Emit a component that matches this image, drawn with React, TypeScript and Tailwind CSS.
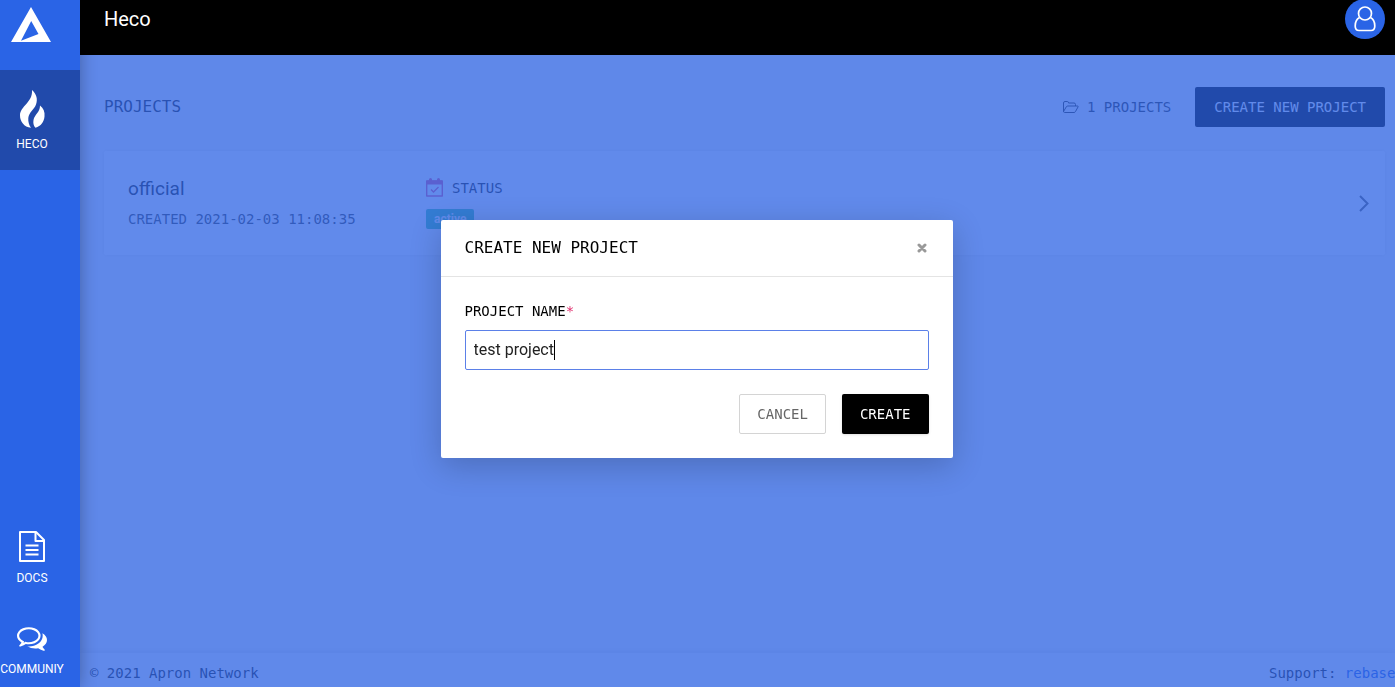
import { useState } from "react";

const mono = "font-['DejaVu_Sans_Mono',monospace]";

function LogoIcon() {
  return (
    <svg viewBox="0 0 40 35" className="h-[35px] w-10" fill="currentColor" aria-hidden="true">
      <path fillRule="evenodd" d="M20 0 40 35H0ZM20.200 14 10 33.800 27.500 27Z" />
    </svg>
  );
}

function FlameIcon() {
  return (
    <svg viewBox="0 0 25 38" className="h-[38px] w-[25px]" fill="currentColor" aria-hidden="true">
      <path d="M12 0C16.500 4 18 9 16 14.500C14 20 9 22 8.300 28C8 32 9 35 11 37.800C4 37 0 31.500 0 25.500C0 16 13 12.500 12 0Z" />
      <path d="M20 15.500C23.500 18 25 22 24.500 26.500C24 32 21 36 15.500 37.800C13.500 36 13 33 13.500 30C14.500 24.500 20 22.500 20 15.500Z" />
    </svg>
  );
}

function DocIcon() {
  return (
    <svg viewBox="0 0 26 31" className="h-[31px] w-[26px]" fill="none" stroke="currentColor" strokeWidth="2" strokeLinejoin="round" aria-hidden="true">
      <path d="M1 1h16L25 9V30H1Z" />
      <path d="M16.500 1.500v8.500H25" />
      <path d="M6.500 14.500h13M6.500 19h13M6.500 23.500h13" />
    </svg>
  );
}

function CommentsIcon() {
  return (
    <svg viewBox="0 0 1792 1536" className="h-[26px] w-[30px]" fill="currentColor" aria-hidden="true">
      <path d="M704 128q-153 0-286 52t-211.500 141T128 512q0 82 53 158t149 132l97 56-35 84q34-20 62-39l44-31 53 10q78 14 153 14 153 0 286-52t211.500-141T1280 512t-78.500-191T990 180 704 128zm0-128q191 0 353.500 68.500t256.500 186.500 94 257-94 257-256.500 186.500T704 1024q-86 0-176-16-124 88-278 128-36 9-86 16h-3q-11 0-20.500-8t-11.500-21q-1-3-1-6.500t.5-6.500 2-6l2.500-5 3.500-5.500 4-5 4.500-5 4-4.500q5-6 23-25t26-29.500 22.500-29 25-38.500 20.500-44q-124-72-195-177T0 512q0-139 94-257T350.500 68.500 704 0zm822 1169q10 24 20.500 44t25 38.500 22.500 29 26 29.500 23 25q1 1 4 4.500t4.500 5 4 5 3.500 5.500l2.500 5 2 6 .5 6.500-1 6.500q-3 14-13 22t-22 7q-50-7-86-16-154-40-278-128-90 16-176 16-271 0-472-132 58 4 88 4 161 0 309-45t264-129q125-92 192-212t67-254q0-77-23-152 129 71 204 178t75 230q0 120-71 224.500T1526 1169z" />
    </svg>
  );
}

function UserIcon() {
  return (
    <svg viewBox="0 0 22 26" className="h-[26px] w-[22px]" fill="none" stroke="currentColor" strokeWidth="1.700" aria-hidden="true">
      <circle cx="11" cy="7.500" r="6.500" />
      <path d="M5.500 11.500C2.500 13 1.200 16.500 1.200 20C1.200 23 2.500 24.500 5 24.500H17C19.500 24.500 20.800 23 20.800 20C20.800 16.500 19.500 13 16.500 11.500" />
    </svg>
  );
}

function CalendarIcon() {
  return (
    <svg viewBox="0 0 17 19" className="h-[19px] w-[17px]" fill="none" stroke="currentColor" aria-hidden="true">
      <path d="M.7 3h15.600v15H.7Z" strokeWidth="1.400" strokeLinejoin="round" />
      <path d="M.7 3h15.600v3H.7Z" fill="currentColor" />
      <path d="M4.500 4v-2.500M12.500 4v-2.500" strokeWidth="3" strokeLinecap="round" />
      <path d="M5 11.500l2.500 2.500 5-5" strokeWidth="1.300" />
    </svg>
  );
}

function FolderIcon() {
  return (
    <svg viewBox="0 0 16 12" className="h-3 w-4" fill="none" stroke="currentColor" strokeLinejoin="round" aria-hidden="true">
      <path d="M.5 10V2Q.5.5 2 .5H4.500Q5.500.5 5.500 2H11Q12.500 2 12.500 3.500V5M.5 10.500 3.500 5.500Q4 5 5 5H14.500Q15.500 5 15 6L12.500 10.500Q12 11.500 11 11.500H1.500Q.5 11.500.5 10" />
    </svg>
  );
}

function ChevronIcon() {
  return (
    <svg viewBox="0 0 10 17" className="h-[17px] w-[10px]" fill="none" stroke="currentColor" strokeWidth="2" aria-hidden="true">
      <path d="M1 1l7.500 7.500L1 16" />
    </svg>
  );
}

function CloseIcon() {
  return (
    <svg viewBox="0 0 10 10" className="size-[10px]" stroke="currentColor" strokeWidth="3" strokeLinecap="round" aria-hidden="true">
      <path d="M2 2l6 6M8 2L2 8" />
    </svg>
  );
}

function Sidebar() {
  return (
    <nav className="relative z-20 flex w-20 shrink-0 flex-col bg-[#2a64e6] text-xs text-white shadow-[0_0_16px_rgba(0,0,0,0.3)]">
      <a href="#home" aria-label="Apron" className="flex h-[70px] w-[61px] justify-center pt-[7px]">
        <LogoIcon />
      </a>
      <a href="#heco" className="flex h-[100px] flex-col items-center gap-2 bg-[#214aab] pt-5 pr-4">
        <FlameIcon />
        HECO
      </a>
      <div className="mt-auto flex flex-col pb-[10px]">
        <a href="#docs" className="flex h-[92px] flex-col items-center gap-2 pr-4">
          <DocIcon />
          DOCS
        </a>
        <a href="#community" className="flex flex-col items-center gap-2 pt-1 pr-4">
          <CommentsIcon />
          COMMUNIY
        </a>
      </div>
    </nav>
  );
}

export default function App() {
  const [name, setName] = useState("test project");

  return (
    <div className="flex h-screen overflow-hidden bg-[#f7f7f7] font-[Roboto,sans-serif] text-black">
      <Sidebar />
      <div className="flex min-w-0 flex-1 flex-col">
        <header className="relative z-30 flex h-[55px] shrink-0 items-center justify-between bg-black pr-[10px] pb-[17px] pl-6 text-white">
          <h1 className="text-xl">Heco</h1>
          <button aria-label="Account" className="flex size-10 items-center justify-center rounded-full bg-[#2a64e6]">
            <UserIcon />
          </button>
        </header>

        <div className="relative flex min-h-0 flex-1 flex-col">
          <main className="flex-1 pt-8 pr-[10px] pl-6">
            <div className={`flex items-center gap-6 text-sm ${mono}`}>
              <h2 className="mr-auto text-base text-[#222222]">PROJECTS</h2>
              <span className="flex items-center gap-2 text-[#333333]">
                <FolderIcon />1 PROJECTS
              </span>
              <button className="h-10 rounded-xs bg-black px-[19px] text-white">CREATE NEW PROJECT</button>
            </div>

            <article className="mt-6 flex h-[104px] items-center rounded-xs bg-white px-6 shadow-[0_0_4px_rgba(0,0,0,0.08)]">
              <div className="flex w-[298px] flex-col gap-2">
                <h3 className="text-[19px] leading-6 text-[#222222]">official</h3>
                <p className={`text-sm text-[#444444] ${mono}`}>CREATED 2021-02-03 11:08:35</p>
              </div>
              <div className="flex flex-1 flex-col items-start gap-[11px]">
                <div className="flex items-center gap-[9px] text-[#e35894]">
                  <CalendarIcon />
                  <span className={`text-sm text-[#222222] ${mono}`}>STATUS</span>
                </div>
                <span className="rounded-xs bg-[#48c8a0] px-2 text-xs leading-5 font-bold text-white">active</span>
              </div>
              <a href="#official" aria-label="Open official" className="-mr-2 text-[#666666]">
                <ChevronIcon />
              </a>
            </article>
          </main>

          <footer className={`flex h-[34px] items-center justify-between bg-[#fafafa] pt-[6px] pl-[10px] text-sm text-[#222222] shadow-[0_0_8px_rgba(0,0,0,0.12)] ${mono}`}>
            <span>© 2021 Apron Network</span>
            <span className="w-[126px] whitespace-nowrap">
              Support: <a href="#support" className="text-[#2a64e6]">rebase</a>
            </span>
          </footer>

          <div className="absolute inset-0 bg-[#2c63e4]/75" />
        </div>
      </div>

      <div className="fixed inset-0 z-40 flex items-center justify-center pr-[2px] pb-[10px]">
        <form
          role="dialog"
          aria-labelledby="dialog-title"
          onSubmit={(e) => e.preventDefault()}
          className="w-full max-w-lg rounded-xs bg-white shadow-[0_8px_32px_rgba(0,0,0,0.2)]"
        >
          <div className="flex h-[57px] items-center justify-between border-b border-[#e4e4e4] px-6">
            <h2 id="dialog-title" className={`text-base ${mono}`}>CREATE NEW PROJECT</h2>
            <button type="button" aria-label="Close" className="px-[2px] text-[#999999]">
              <CloseIcon />
            </button>
          </div>
          <div className={`p-6 text-sm ${mono}`}>
            <label htmlFor="project-name" className="block">
              PROJECT NAME<span className="text-[#e0306e]">*</span>
            </label>
            <div className="mt-[9px] flex h-10 items-center rounded-xs border border-[#5b80e8] px-2 font-[Roboto,sans-serif] text-base">
              <input
                id="project-name"
                value={name}
                onChange={(e) => setName(e.target.value)}
                className="max-w-full field-sizing-content text-[#222222] caret-transparent outline-none"
              />
              <span aria-hidden="true" className="h-5 w-px bg-black" />
            </div>
            <div className="mt-6 flex justify-end gap-4">
              <button type="button" className="h-10 rounded-xs border border-[#d4d4d4] px-[17px] text-[#666666]">CANCEL</button>
              <button type="submit" className="h-10 rounded-xs bg-black px-[18px] text-white shadow-sm">CREATE</button>
            </div>
          </div>
        </form>
      </div>
    </div>
  );
}
